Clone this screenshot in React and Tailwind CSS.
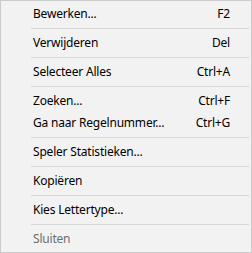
import React from "react";

const groups = [
  [{ label: "Bewerken...", sc: "F2" }],
  [{ label: "Verwijderen", sc: "Del" }],
  [{ label: "Selecteer Alles", sc: "Ctrl+A" }],
  [
    { label: "Zoeken...", sc: "Ctrl+F" },
    { label: "Ga naar Regelnummer...", sc: "Ctrl+G" },
  ],
  [{ label: "Speler Statistieken..." }],
  [{ label: "Kopiëren" }],
  [{ label: "Kies Lettertype..." }],
  [{ label: "Sluiten", disabled: true }],
];

function Item({ label, sc, disabled }) {
  return (
    <div
      className={`flex h-[22px] items-center justify-between pl-[32px] pr-[21px] ${
        disabled ? "text-[#6d6d6d]" : "text-black"
      }`}
    >
      <span>{label}</span>
      {sc ? <span>{sc}</span> : null}
    </div>
  );
}

export default function App() {
  return (
    <div className="flex h-[253px] w-[252px] flex-col border border-[#cccccc] bg-[#f2f2f2] py-[2px] font-['Noto_Sans',sans-serif] text-[12px] leading-none tracking-[-0.2px]">
      {groups.map((g, i) => (
        <React.Fragment key={i}>
          {i > 0 && <div className="my-[3px] ml-[30px] mr-[2px] h-px bg-[#d7d7d7]" />}
          {g.map((it) => (
            <Item key={it.label} {...it} />
          ))}
        </React.Fragment>
      ))}
    </div>
  );
}
